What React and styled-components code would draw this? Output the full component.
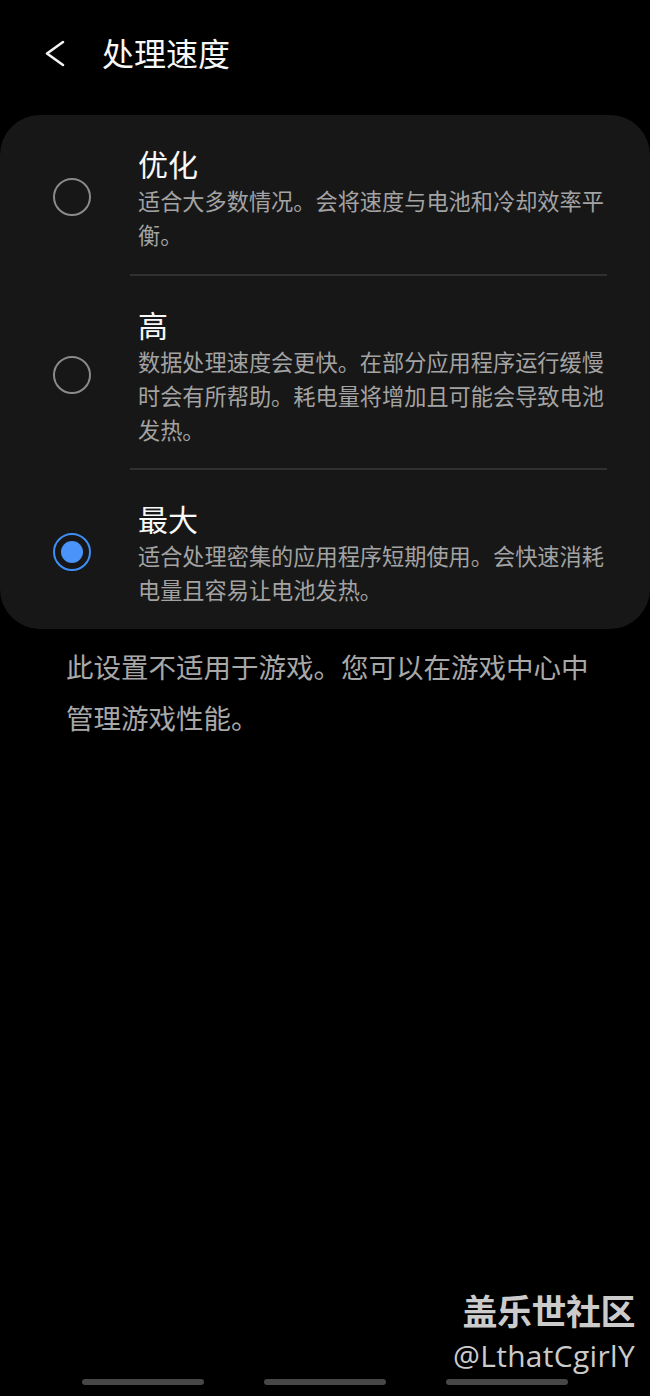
import styled, { createGlobalStyle } from 'styled-components';

const GlobalStyle = createGlobalStyle`
  html, body {
    margin: 0;
    padding: 0;
    background: #000;
  }
  body {
    font-family: 'Noto Sans CJK SC', 'Noto Sans', sans-serif;
    -webkit-font-smoothing: antialiased;
  }
`;

const options = [
  {
    title: '优化',
    desc: '适合大多数情况。会将速度与电池和冷却效率平衡。',
    selected: false
  },
  {
    title: '高',
    desc: '数据处理速度会更快。在部分应用程序运行缓慢时会有所帮助。耗电量将增加且可能会导致电池发热。',
    selected: false
  },
  {
    title: '最大',
    desc: '适合处理密集的应用程序短期使用。会快速消耗电量且容易让电池发热。',
    selected: true
  }
];

const Screen = styled.div`
  position: relative;
  width: 650px;
  height: 1396px;
  background: #000;
  display: flex;
  flex-direction: column;
  overflow: hidden;
`;

const Header = styled.header`
  height: 103px;
  display: flex;
  align-items: center;
  padding-left: 44px;
  gap: 36px;
`;

const BackButton = styled.button`
  width: 22px;
  height: 29px;
  padding: 0;
  border: 0;
  background: none;
  display: flex;
  align-items: center;
  justify-content: center;
  margin-top: 4px;
`;

const Title = styled.h1`
  margin: 0;
  font-size: 32px;
  line-height: 40px;
  font-weight: 400;
  color: #f7f7f7;
`;

const Card = styled.section`
  margin-top: 12px;
  background: #171717;
  border-radius: 40px;
  display: flex;
  flex-direction: column;
`;

const Option = styled.div`
  display: flex;
  align-items: center;
  padding: 28px 43px 22.5px 0;
`;

const RadioCell = styled.div`
  width: 138px;
  flex-shrink: 0;
  display: flex;
  padding-left: 53px;
  box-sizing: border-box;
`;

const Radio = styled.span`
  width: 38px;
  height: 38px;
  box-sizing: border-box;
  border-radius: 50%;
  border: 2px solid ${p => (p.$on ? '#3d8ef5' : '#8a8a8a')};
  display: flex;
  align-items: center;
  justify-content: center;

  &::after {
    content: '';
    display: ${p => (p.$on ? 'block' : 'none')};
    width: 22px;
    height: 22px;
    border-radius: 50%;
    background: #4a93f8;
  }
`;

const OptionText = styled.div`
  flex: 1;
  min-width: 0;
`;

const OptionTitle = styled.div`
  font-size: 30px;
  line-height: 40px;
  color: #f8f8f8;
`;

const OptionDesc = styled.div`
  font-size: 22.2px;
  line-height: 34px;
  color: #a3a3a3;
`;

const Divider = styled.div`
  height: 2px;
  margin: 0 43px 0 130px;
  background: #303030;
`;

const Note = styled.p`
  margin: 0;
  padding: 12px 52px 0 66px;
  font-size: 27.5px;
  line-height: 51px;
  color: #a8a8a8;
`;

const NavBar = styled.nav`
  margin-top: auto;
  height: 16px;
  display: flex;
  justify-content: center;
  gap: 60px;
  padding-bottom: 1px;
`;

const NavPill = styled.span`
  width: 122px;
  height: 6px;
  border-radius: 3px;
  background: #474747;
`;

const Watermark = styled.div`
  position: absolute;
  right: 15px;
  top: 1288px;
  text-align: right;
  color: #cbcbcb;
`;

const WatermarkName = styled.div`
  font-size: 35px;
  line-height: 44px;
  font-weight: 700;
  letter-spacing: -0.5px;
`;

const WatermarkHandle = styled.div`
  margin-top: 4px;
  font-family: 'Open Sans', 'Noto Sans', sans-serif;
  font-size: 30px;
  line-height: 40px;
  font-weight: 400;
  letter-spacing: 0.3px;
`;

const ChevronLeft = () => (
  <svg width="22" height="29" viewBox="0 0 22 29" fill="none">
    <path d="M19 3 L3 14.5 L19 26" stroke="#f2f2f2" strokeWidth="2.6" strokeLinecap="round" strokeLinejoin="round" />
  </svg>
);

export default function App() {
  return (
    <Screen>
      <GlobalStyle />
      <Header>
        <BackButton aria-label="返回">
          <ChevronLeft />
        </BackButton>
        <Title>处理速度</Title>
      </Header>

      <Card>
        {options.map((opt, i) => (
          <div key={opt.title}>
            {i > 0 && <Divider />}
            <Option>
              <RadioCell>
                <Radio $on={opt.selected} />
              </RadioCell>
              <OptionText>
                <OptionTitle>{opt.title}</OptionTitle>
                <OptionDesc>{opt.desc}</OptionDesc>
              </OptionText>
            </Option>
          </div>
        ))}
      </Card>

      <Note>此设置不适用于游戏。您可以在游戏中心中管理游戏性能。</Note>

      <NavBar>
        <NavPill />
        <NavPill />
        <NavPill />
      </NavBar>

      <Watermark>
        <WatermarkName>盖乐世社区</WatermarkName>
        <WatermarkHandle>@LthatCgirlY</WatermarkHandle>
      </Watermark>
    </Screen>
  );
}
